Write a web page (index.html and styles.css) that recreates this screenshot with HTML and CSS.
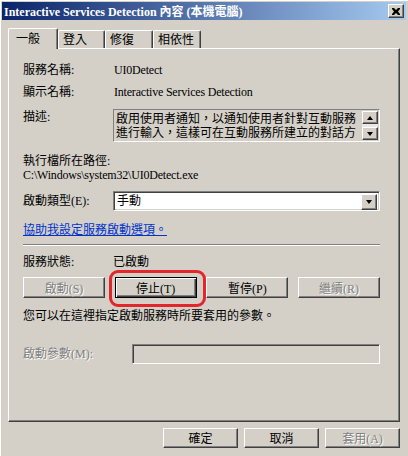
FILE: index.html
```html
<!DOCTYPE html>
<html lang="zh-TW">
<head>
    <meta charset="UTF-8">
    <title>Interactive Services Detection 內容 (本機電腦)</title>
    <link rel="stylesheet" href="styles.css">
</head>
<body>
    <div class="window">
        <div class="titlebar">
            <span class="title">Interactive Services Detection 內容 (本機電腦)</span>
            <span class="close-btn">
                <svg width="8" height="7" viewBox="0 0 8 7">
                    <path d="M0 0h2l2 2 2-2h2v1l-2 2.5 2 2.5v1h-2l-2-2-2 2h-2v-1l2-2.5-2-2.5z" fill="#000"/>
                </svg>
            </span>
        </div>

        <div class="tabs">
            <div class="tab active">一般</div>
            <div class="tab">登入</div>
            <div class="tab">修復</div>
            <div class="tab">相依性</div>
        </div>

        <div class="panel">
            <div class="row row-name">
                <span class="label">服務名稱:</span>
                <span class="value latin">UI0Detect</span>
            </div>
            <div class="row row-display">
                <span class="label">顯示名稱:</span>
                <span class="value latin">Interactive Services Detection</span>
            </div>
            <div class="row row-desc">
                <span class="label">描述:</span>
                <div class="desc-box">
                    <div class="desc-text">
                        <div>啟用使用者通知，以通知使用者針對互動服務</div>
                        <div>進行輸入，這樣可在互動服務所建立的對話方</div>
                    </div>
                    <div class="scrollbar">
                        <span class="scroll-btn"><i class="arrow-up"></i></span>
                        <span class="scroll-track"></span>
                        <span class="scroll-btn"><i class="arrow-down"></i></span>
                    </div>
                </div>
            </div>
            <div class="line row-exe">執行檔所在路徑:</div>
            <div class="line latin">C:\Windows\system32\UI0Detect.exe</div>
            <div class="row row-type">
                <span class="label">啟動類型(E):</span>
                <div class="select">
                    <span class="select-text">手動</span>
                    <span class="select-btn"><i class="arrow-down"></i></span>
                </div>
            </div>
            <a class="line help-link" href="#">協助我設定服務啟動選項。</a>
            <div class="separator"></div>
            <div class="row row-status">
                <span class="label">服務狀態:</span>
                <span class="value">已啟動</span>
            </div>
            <div class="service-buttons">
                <button class="btn disabled">啟動(S)</button>
                <span class="highlight">
                    <button class="btn default">停止(T)</button>
                </span>
                <button class="btn">暫停(P)</button>
                <button class="btn disabled">繼續(R)</button>
            </div>
            <div class="line row-hint">您可以在這裡指定啟動服務時所要套用的參數。</div>
            <div class="row row-param">
                <span class="label param-label disabled-text">啟動參數(M):</span>
                <div class="param-input"></div>
            </div>
        </div>

        <div class="dialog-buttons">
            <button class="btn wide">確定</button>
            <button class="btn wide">取消</button>
            <button class="btn wide disabled">套用(A)</button>
        </div>
    </div>
</body>
</html>
```

FILE: styles.css
```css
* {
    margin: 0;
    padding: 0;
    box-sizing: border-box;
}

body {
    font-family: "Liberation Serif", "Noto Sans CJK TC", serif;
    font-size: 12px;
    color: #000;
    background: #d4d0c8;
    width: 408px;
    height: 456px;
    overflow: hidden;
}

.window {
    height: 456px;
    padding: 2px 2px 0 2px;
    box-shadow: inset 1px 1px #fff;
}

/* title bar */
.titlebar {
    height: 18px;
    display: flex;
    align-items: center;
    justify-content: space-between;
    padding: 0 2px 0 2px;
    background: linear-gradient(90deg, #0a246a 0%, #a6caf0 100%);
}

.title {
    color: #fff;
    font-weight: bold;
    font-size: 12px;
    white-space: nowrap;
}

.close-btn {
    width: 16px;
    height: 14px;
    display: flex;
    align-items: center;
    justify-content: center;
    background: #d4d0c8;
    border: 1px solid;
    border-color: #fff #404040 #404040 #fff;
    box-shadow: inset -1px -1px #808080;
}

/* tabs */
.tabs {
    display: flex;
    align-items: flex-end;
    margin-top: 8px;
    padding-left: 6px;
    height: 20px;
}

.tab {
    height: 18px;
    line-height: 16px;
    padding-left: 4px;
    border-top: 1px solid #fff;
    border-left: 1px solid #fff;
    border-right: 1px solid #404040;
    border-radius: 2px 2px 0 0;
    box-shadow: inset -1px 0 #808080;
    font-family: "Noto Sans CJK TC", sans-serif;
    font-size: 12px;
    width: 48px;
}

.tab.active {
    position: relative;
    z-index: 1;
    height: 21px;
    width: 50px;
    margin-bottom: -1px;
    padding-left: 7px;
    line-height: 18px;
    background: #d4d0c8;
}

.tab:nth-child(2) {
    width: 47px;
}

/* panel */
.panel {
    margin-left: 6px;
    width: 392px;
    height: 374px;
    padding: 0 19px 0 14px;
    border-top: 1px solid #fff;
    border-left: 1px solid #fff;
    border-right: 1px solid #404040;
    border-bottom: 1px solid #404040;
    box-shadow: inset -1px -1px #808080;
}

.row {
    display: flex;
    align-items: center;
}

.label {
    width: 90px;
    flex-shrink: 0;
    line-height: 14px;
}

.value {
    line-height: 14px;
}

.latin {
    font-family: "Liberation Serif", serif;
    font-size: 12px;
    letter-spacing: -0.2px;
}

.value.latin {
    padding-left: 1px;
}

.line {
    display: block;
    line-height: 14px;
}

.row-name {
    margin-top: 14px;
}

.row-display {
    margin-top: 8px;
}

.row-desc {
    margin-top: 10px;
    align-items: flex-start;
}

.row-desc .label {
    padding-top: 1px;
}

.desc-box {
    flex: 1;
    height: 33px;
    display: flex;
    border: 1px solid;
    border-color: #808080 #fff #fff #808080;
    padding: 1px 1px 1px 2px;
}

.desc-text {
    flex: 1;
    font-family: "Noto Sans CJK TC", sans-serif;
    line-height: 14px;
    white-space: nowrap;
}

.scrollbar {
    width: 16px;
    display: flex;
    flex-direction: column;
}

.scroll-btn,
.select-btn {
    height: 13px;
    display: flex;
    align-items: center;
    justify-content: center;
    background: #d4d0c8;
    border: 1px solid;
    border-color: #fff #404040 #404040 #fff;
    box-shadow: inset -1px -1px #808080;
}

.scroll-track {
    flex: 1;
    background: #eae8e4;
}

.arrow-up,
.arrow-down {
    display: block;
    width: 0;
    height: 0;
    border-left: 3.5px solid transparent;
    border-right: 3.5px solid transparent;
}

.arrow-up {
    border-bottom: 4px solid #000;
}

.arrow-down {
    border-top: 4px solid #000;
}

.row-exe {
    margin-top: 12px;
}

.row-type {
    margin-top: 9px;
}

.select {
    flex: 1;
    height: 20px;
    display: flex;
    background: #fff;
    border: 1px solid;
    border-color: #808080 #fff #fff #808080;
    box-shadow: inset 1px 1px #404040, inset -1px -1px #d4d0c8;
    padding: 2px;
}

.select-text {
    flex: 1;
    line-height: 14px;
    padding-left: 1px;
}

.select-btn {
    width: 16px;
    height: 16px;
}

.help-link {
    margin-top: 12px;
    color: #0033cc;
    text-decoration: underline;
    width: fit-content;
}

.separator {
    margin-top: 7px;
    height: 2px;
    border-top: 1px solid #808080;
    border-bottom: 1px solid #fff;
}

.row-status {
    margin-top: 9px;
}

.service-buttons {
    margin-top: 8px;
    display: flex;
    justify-content: space-between;
}

.btn {
    width: 82px;
    height: 21px;
    font-family: "Liberation Serif", "Noto Sans CJK TC", serif;
    font-size: 12px;
    color: #000;
    background: #d4d0c8;
    border: 1px solid;
    border-color: #fff #404040 #404040 #fff;
    box-shadow: inset -1px -1px #808080;
}

.btn.default {
    border: 1px solid #000;
    box-shadow: inset 1px 1px #fff, inset -1px -1px #404040, inset -2px -2px #808080;
}

.btn.disabled,
.disabled-text {
    color: #808080;
    text-shadow: 1px 1px #fff;
}

.highlight {
    position: relative;
    display: block;
}

.highlight::after {
    content: "";
    position: absolute;
    top: -7px;
    left: -6px;
    right: -9px;
    bottom: -9px;
    border: 3px solid #e3262b;
    border-radius: 9px;
}

.row-hint {
    margin-top: 11px;
}

.row-param {
    margin-top: 21px;
}

.param-label {
    width: 109px;
}

.param-input {
    flex: 1;
    height: 20px;
    border: 1px solid;
    border-color: #808080 #fff #fff #808080;
    box-shadow: inset 1px 1px #404040, inset -1px -1px #d4d0c8;
}

/* bottom buttons */
.dialog-buttons {
    margin-top: 6px;
    display: flex;
    justify-content: flex-end;
    gap: 6px;
    padding-right: 6px;
}

.btn.wide {
    width: 75px;
    height: 20px;
}
```
